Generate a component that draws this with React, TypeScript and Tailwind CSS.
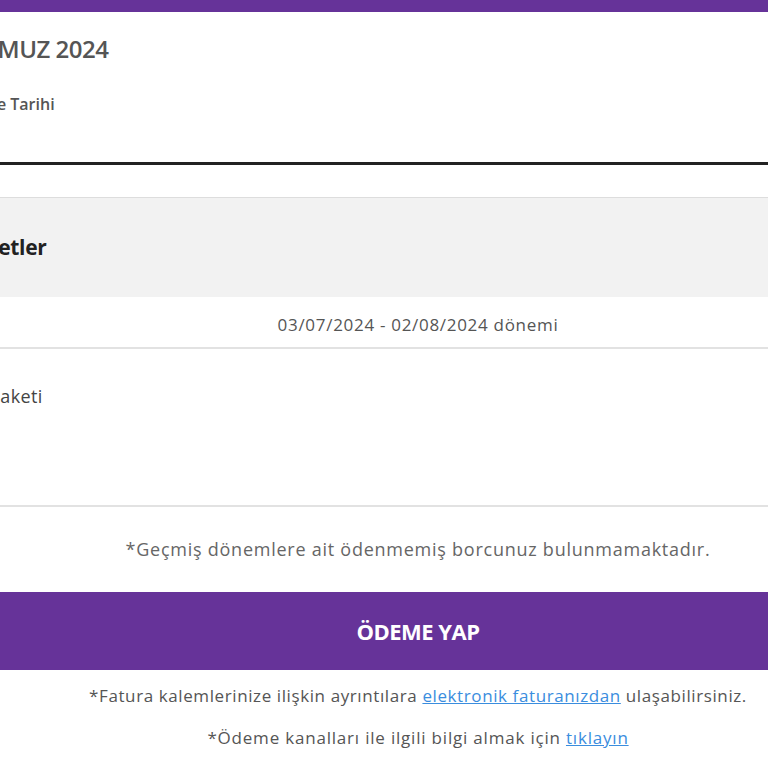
import React from "react";

export default function App() {
  const font = { fontFamily: '"Open Sans", "Noto Sans", sans-serif' };
  return (
    <div className="w-[768px] h-[768px] overflow-hidden bg-white relative" style={font}>
      <div className="ml-[-80px] w-[996px] flex flex-col">
        <div className="h-[12px] bg-[#663399]" />
        <div className="h-[150px] flex flex-col pl-[30px] pt-[19px]">
          <div className="text-[24px] font-semibold text-[#555] leading-[36px] tracking-[-0.5px]">TEMMUZ 2024</div>
          <div className="mt-[25px] ml-[-33px] text-[16px] font-semibold text-[#555] leading-[24px]">Son Ödeme Tarihi</div>
        </div>
        <div className="h-[3px] bg-[#222]" />
        <div className="h-[32px]" />
        <div className="border-t border-[#ddd] bg-[#f2f2f2] h-[100px] flex items-center pl-[30px]">
          <div className="text-[21px] font-bold text-[#222] ml-[-4px] tracking-[-0.3px]">Hizmetler</div>
        </div>
        <div className="h-[52px] flex items-center justify-center border-b-2 border-[#e2e2e2] pt-[5px]">
          <div className="text-[17px] tracking-[0.7px] text-[#555]">03/07/2024 - 02/08/2024 dönemi</div>
        </div>
        <div className="h-[158px] border-b-2 border-[#e2e2e2] pt-[35px] pl-[30px]">
          <div className="text-[18px] leading-[24px] tracking-[0.4px] text-[#444] ml-[39px]">Paketi</div>
        </div>
        <div className="h-[85px] flex items-center justify-center">
          <div className="text-[18px] tracking-[0.75px] text-[#666]">*Geçmiş dönemlere ait ödenmemiş borcunuz bulunmamaktadır.</div>
        </div>
        <div className="h-[78px] bg-[#663399] flex items-center justify-center">
          <div className="text-[22px] font-bold text-white tracking-[-0.5px]">ÖDEME YAP</div>
        </div>
        <div className="flex flex-col items-center pt-[14px] gap-[18px]">
          <div className="text-[17px] tracking-[0.6px] text-[#555] leading-[24px]">
            *Fatura kalemlerinize ilişkin ayrıntılara{" "}
            <a className="text-[#3a8dde] underline">elektronik faturanızdan</a> ulaşabilirsiniz.
          </div>
          <div className="text-[17px] tracking-[0.8px] text-[#555] leading-[24px]">
            *Ödeme kanalları ile ilgili bilgi almak için{" "}
            <a className="text-[#3a8dde] underline">tıklayın</a>
          </div>
        </div>
      </div>
    </div>
  );
}
